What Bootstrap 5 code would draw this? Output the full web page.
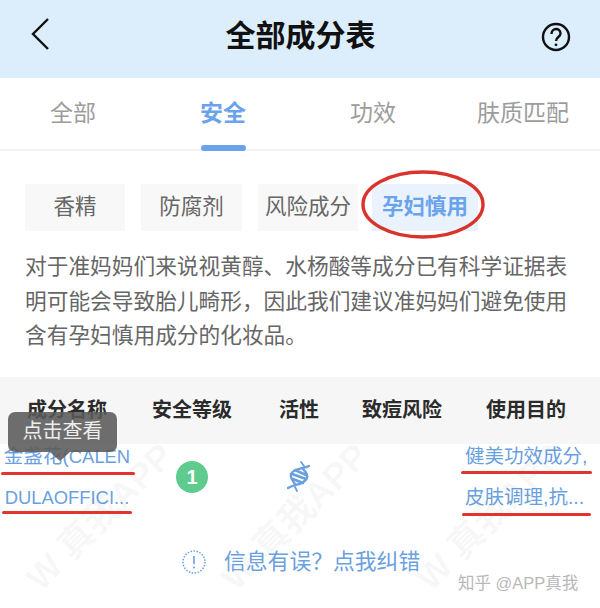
<!DOCTYPE html>
<html lang="zh-CN">
<head>
  <meta charset="UTF-8" />
  <meta name="viewport" content="width=device-width, initial-scale=1.0" />
  <title>全部成分表</title>
  <link href="https://cdn.jsdelivr.net/npm/bootstrap@5.3.0/dist/css/bootstrap.min.css" rel="stylesheet" />
  <style>
    body {
      width: 600px;
      height: 608px;
      overflow: hidden;
      background: #fff;
      font-family: "Liberation Sans", "Noto Sans CJK SC", sans-serif;
    }
    .page-wrap { position: relative; height: 608px; overflow: hidden; }

    /* header */
    .top-bar { height: 78px; background: #dcedfc; padding: 0 29px 6px 30px; }
    .top-title { font-size: 30px; font-weight: 700; color: #111; line-height: 1; margin-left: 10px; }
    .back-icon { margin-top: -4px; }
    .help-icon { margin-top: 2px; }

    /* tabs */
    .tab-row { height: 73px; border-bottom: 2px solid #f3f3f3; }
    .tab-item { position: relative; width: 150px; padding-right: 4px; font-size: 23px; color: #9c9c9c; line-height: 1; text-align: center; }
    .tab-on { color: #6aa3ec; font-weight: 700; }
    .tab-on::after {
      content: "";
      position: absolute;
      left: 50%;
      bottom: -26px;
      width: 45px;
      height: 6px;
      margin-left: -24px;
      border-radius: 3px;
      background: #6aa3ec;
    }

    /* filter chips */
    .chip-row { padding: 33px 0 0 25px; }
    .chip { height: 47px; margin-right: 16px; background: #f8f8f8; font-size: 21.5px; color: #666; line-height: 47px; text-align: center; white-space: nowrap; }
    .chip-a { width: 100px; }
    .chip-b { width: 101px; }
    .chip-c { width: 100px; margin-right: 14px; }
    .chip-d { width: 106px; margin-right: 0; background: #eaf3fd; color: #6aa3ec; font-weight: 700; }
    .red-ring { position: absolute; left: 361px; top: 170px; width: 124px; height: 69px; }

    .intro-text { padding: 0 25px; margin: 19px 0 0; font-size: 21.7px; line-height: 34.5px; color: #666; }

    /* ingredient table */
    .ing-head { position: relative; z-index: 1; margin-top: 23px; height: 67px; background: #f6f6f6; font-size: 20px; font-weight: 700; color: #2b2b2b; }
    .ing-cell { flex: none; text-align: center; }
    .w-name { width: 134px; }
    .w-level { width: 116px; }
    .w-active { width: 98px; }
    .w-risk { width: 108px; }
    .w-use { width: 140px; }
    .ing-link { font-size: 19.5px; line-height: 41px; color: #6a9fe0; white-space: nowrap; }
    .ing-link.w-use { padding-left: 9px; text-align: left; }
    .latin-part { font-size: 18.4px; }
    .ing-body { height: 66px; }
    .level-dot { width: 32px; height: 32px; border-radius: 50%; background: #5fcb8e; color: #fff; font-size: 20px; font-weight: 700; line-height: 32px; text-align: center; }

    .red-line { position: absolute; z-index: 2; height: 3px; background: #e2342c; border-radius: 2px; }
    .line-a { left: 1px; top: 472px; width: 134px; }
    .line-b { left: 2px; top: 511px; width: 130px; }
    .line-c { left: 461px; top: 471px; width: 131px; }
    .line-d { left: 462px; top: 513px; width: 129px; }
    .tip-box { position: absolute; z-index: 2; left: 8px; top: 412px; width: 109px; height: 40px; border-radius: 7px; background: rgba(90, 90, 90, .88); color: #eee; font-size: 20px; line-height: 38px; text-align: center; }
    .tip-arrow { position: absolute; z-index: 2; left: 50px; top: 452px; width: 0; height: 0; border-left: 10px solid transparent; border-right: 10px solid transparent; border-top: 9px solid rgba(90, 90, 90, .88); }

    .fix-row { position: absolute; left: 182px; top: 547px; gap: 18px; font-size: 21.8px; line-height: 30px; color: #6a9fe0; }
    .zhihu-mark { position: absolute; left: 458px; top: 571px; font-size: 16.5px; line-height: 24px; color: #b8b8b8; }

    /* faint watermark, the table head covers its top end */
    .mark-word { position: absolute; top: 497px; width: 200px; font-size: 36px; line-height: 40px; font-weight: 700; text-align: center; color: rgba(0, 0, 0, .04); transform: rotate(-45deg); white-space: nowrap; }
    .mark-a { left: 0; }
    .mark-b { left: 195px; }
    .mark-c { left: 390px; }
  </style>
</head>
<body>
  <div class="page-wrap">
    <!-- Header -->
    <div class="top-bar d-flex align-items-center justify-content-between">
      <svg class="back-icon" width="20" height="34" viewBox="0 0 20 34" fill="none" stroke="#111" stroke-width="2.4"><path d="M18 2 L3 17 L18 32" /></svg>
      <div class="top-title">全部成分表</div>
      <svg class="help-icon" width="30" height="30" viewBox="0 0 30 30" fill="none" stroke="#111" stroke-width="2.4">
        <circle cx="15" cy="15" r="13" />
        <path d="M10.5 12 C10.5 5.5 19.5 5.5 19.5 11.5 C19.5 15 15 15 15 19" />
        <circle cx="15" cy="22.8" r="1.4" fill="#111" stroke="none" />
      </svg>
    </div>

    <!-- Tabs -->
    <div class="tab-row d-flex align-items-center">
      <div class="tab-item">全部</div>
      <div class="tab-item tab-on">安全</div>
      <div class="tab-item">功效</div>
      <div class="tab-item">肤质匹配</div>
    </div>

    <!-- Filter chips -->
    <div class="chip-row d-flex">
      <div class="chip chip-a">香精</div>
      <div class="chip chip-b">防腐剂</div>
      <div class="chip chip-c">风险成分</div>
      <div class="chip chip-d">孕妇慎用</div>
    </div>

    <p class="intro-text">对于准妈妈们来说视黄醇、水杨酸等成分已有科学证据表明可能会导致胎儿畸形，因此我们建议准妈妈们避免使用含有孕妇慎用成分的化妆品。</p>

    <!-- Table -->
    <div class="ing-head d-flex align-items-center">
      <div class="ing-cell w-name">成分名称</div>
      <div class="ing-cell w-level">安全等级</div>
      <div class="ing-cell w-active">活性</div>
      <div class="ing-cell w-risk">致痘风险</div>
      <div class="ing-cell w-use">使用目的</div>
    </div>
    <div class="ing-body d-flex align-items-center">
      <div class="ing-cell w-name ing-link">金盏花(<span class="latin-part">CALEN</span><br /><span class="latin-part">DULAOFFICI...</span></div>
      <div class="ing-cell w-level d-flex justify-content-center"><div class="level-dot">1</div></div>
      <div class="ing-cell w-active d-flex justify-content-center">
        <svg width="24" height="32" viewBox="0 0 24 32" fill="none" stroke="#6a9fe0" stroke-linecap="round">
          <path d="M22 5 C16 8 7 7 4 13 C3 17 6 20 8 23" stroke-width="2.4" />
          <path d="M1 27 C7 23 17 24 20 17 C21 13 18 10 15 7" stroke-width="2.4" />
          <path d="M14 1 L17 5 M10 30 L8 26" stroke-width="1.8" />
          <path d="M8 9 L19 14 M5 13 L19 18 M6 18 L16 22" stroke-width="2.6" />
        </svg>
      </div>
      <div class="ing-cell w-risk"></div>
      <div class="ing-cell w-use ing-link">健美功效成分,<br />皮肤调理,抗...</div>
    </div>

    <!-- Watermark -->
    <div class="mark-word mark-a">W 真我APP</div>
    <div class="mark-word mark-b">W 真我APP</div>
    <div class="mark-word mark-c">W 真我APP</div>

    <!-- Overlays from the original annotation -->
    <svg class="red-ring" viewBox="0 0 124 69" fill="none" stroke="#d9342c" stroke-width="3.4"><ellipse cx="62" cy="34.5" rx="60" ry="32.5" /></svg>
    <div class="red-line line-a"></div>
    <div class="red-line line-b"></div>
    <div class="red-line line-c"></div>
    <div class="red-line line-d"></div>
    <div class="tip-box">点击查看</div>
    <div class="tip-arrow"></div>

    <!-- Report row -->
    <div class="fix-row d-flex align-items-center">
      <svg width="24" height="24" viewBox="0 0 24 24" fill="none" stroke="#6a9fe0">
        <circle cx="12" cy="12" r="11" stroke-width="1.5" stroke-dasharray="1.5 1.5" />
        <path d="M12 6 V14" stroke-width="1.6" />
        <circle cx="12" cy="17.5" r="1" fill="#6a9fe0" stroke="none" />
      </svg>
      <span>信息有误？点我纠错</span>
    </div>
    <div class="zhihu-mark">知乎 @APP真我</div>
  </div>
  <script src="https://cdn.jsdelivr.net/npm/bootstrap@5.3.0/dist/js/bootstrap.bundle.min.js"></script>
</body>
</html>
